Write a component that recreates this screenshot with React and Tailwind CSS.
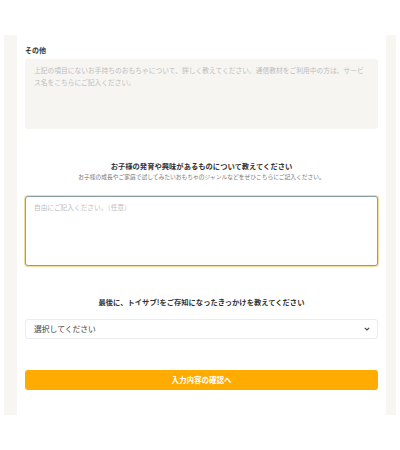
export default function App() {
  const font = { fontFamily: '"Noto Sans CJK JP", "Noto Sans", sans-serif' };
  return (
    <div className="w-[400px] h-[450px] bg-white relative" style={font}>
      <div className="h-[35px]" />
      <div className="mx-[4px] h-[380px] bg-[#f7f6f2] pl-[13px] pr-[10px] flex">
        <div className="flex-1 bg-white -mt-[35px] px-[8px] pt-[45px]">
          <div className="text-[7px] font-bold text-[#333] leading-[10px]">その他</div>
          <div className="mt-[4px] h-[70px] rounded-[3px] bg-[#f6f5f2] pl-[9px] pr-[11px] pt-[5px] text-[6.75px] leading-[12px] text-[#bdbdbd]">
            上記の項目にないお手持ちのおもちゃについて、詳しく教えてください。通信教材をご利用中の方は、サービス名をこちらにご記入ください。
          </div>
          <div className="mt-[31px] text-center text-[7.3px] font-bold text-[#333] leading-[12px]">
            お子様の発育や興味があるものについて教えてください
          </div>
          <div className="mt-[1px] text-center text-[5.75px] text-[#777] leading-[8px]">
            お子様の成長やご家庭で試してみたいおもちゃのジャンルなどをぜひこちらにご記入ください。
          </div>
          <div className="mt-[15px] h-[70px] rounded-[3px] border border-[#8aa09c] shadow-[0_0_0_1px_#f2dc9c] bg-white px-[8px] pt-[4px] text-[6.7px] leading-[12px] text-[#bdbdbd]">
            自由にご記入ください。（任意）
          </div>
          <div className="mt-[30px] text-center text-[7.3px] font-bold text-[#333] leading-[12px]">
            最後に、トイサブ!をご存知になったきっかけを教えてください
          </div>
          <div className="mt-[11px] h-[20px] rounded-[3px] border border-[#ececec] bg-white flex items-center justify-between pl-[8px] pr-[7px]">
            <span className="text-[7.8px] text-[#444] leading-[10px]">選択してください</span>
            <svg width="6" height="4" viewBox="0 0 6 4" fill="none">
              <path d="M0.8 0.8 L3 3 L5.2 0.8" stroke="#444" strokeWidth="1.1" />
            </svg>
          </div>
          <div className="mt-[31px] h-[20px] rounded-[3px] bg-[#ffab00] flex items-center justify-center text-[7.5px] font-bold text-white leading-[10px]">
            入力内容の確認へ
          </div>
        </div>
      </div>
    </div>
  );
}
